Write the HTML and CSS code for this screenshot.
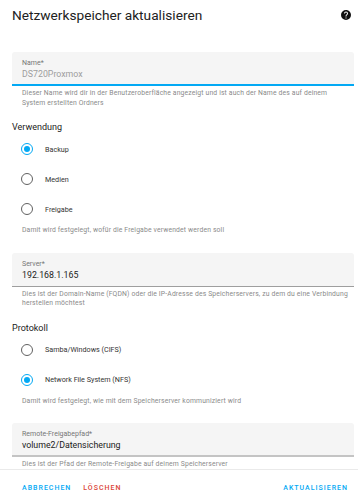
FILE: index.html
```html
<!DOCTYPE html>
<html lang="de">
<head>
    <meta charset="UTF-8">
    <title>Netzwerkspeicher aktualisieren</title>
    <link rel="stylesheet" href="styles.css">
</head>
<body>
    <div class="dialog">
        <header class="head">
            <h2 class="title">Netzwerkspeicher aktualisieren</h2>
            <svg class="help" viewBox="0 0 24 24" width="12" height="12">
                <path d="M15.07,11.25L14.17,12.17C13.45,12.89 13,13.5 13,15H11V14.5C11,13.39 11.45,12.39 12.17,11.67L13.41,10.41C13.78,10.05 14,9.55 14,9C14,7.89 13.1,7 12,7A2,2 0 0,0 10,9H8A4,4 0 0,1 12,5A4,4 0 0,1 16,9C16,9.880 15.64,10.67 15.07,11.25M13,19H11V17H13M12,2A10,10 0 0,0 2,12A10,10 0 0,0 12,22A10,10 0 0,0 22,12C22,6.47 17.5,2 12,2Z" fill="#111"/>
            </svg>
        </header>

        <div class="content">
            <div class="field disabled focus">
                <span class="f-label">Name*</span>
                <span class="f-value">DS720Proxmox</span>
            </div>
            <p class="helper">Dieser Name wird dir in der Benutzeroberfläche angezeigt und ist auch der Name des auf deinem System erstellten Ordners</p>

            <div class="group-label">Verwendung</div>
            <ul class="radios">
                <li class="radio checked"><span class="dot"></span>Backup</li>
                <li class="radio"><span class="dot"></span>Medien</li>
                <li class="radio"><span class="dot"></span>Freigabe</li>
            </ul>
            <p class="helper one">Damit wird festgelegt, wofür die Freigabe verwendet werden soll</p>

            <div class="field">
                <span class="f-label">Server*</span>
                <span class="f-value">192.168.1.165</span>
            </div>
            <p class="helper">Dies ist der Domain-Name (FQDN) oder die IP-Adresse des Speicherservers, zu dem du eine Verbindung herstellen möchtest</p>

            <div class="group-label">Protokoll</div>
            <ul class="radios">
                <li class="radio"><span class="dot"></span>Samba/Windows (CIFS)</li>
                <li class="radio checked"><span class="dot"></span>Network File System (NFS)</li>
            </ul>
            <p class="helper one">Damit wird festgelegt, wie mit dem Speicherserver kommuniziert wird</p>

            <div class="field hover">
                <span class="f-label">Remote-Freigabepfad*</span>
                <span class="f-value">volume2/Datensicherung</span>
            </div>
            <p class="helper">Dies ist der Pfad der Remote-Freigabe auf deinem Speicherserver</p>
        </div>

        <footer class="actions">
            <a class="btn">Abbrechen</a>
            <a class="btn warn">Löschen</a>
            <a class="btn push">Aktualisieren</a>
        </footer>
    </div>
</body>
</html>
```

FILE: styles.css
```css
* {
    margin: 0;
    padding: 0;
    box-sizing: border-box;
}

body {
    background: #fff;
    font-family: Roboto, "Liberation Sans", sans-serif;
    color: #212121;
}

.dialog {
    width: 358px;
    height: 500px;
    overflow: hidden;
    display: flex;
    flex-direction: column;
}

.head {
    display: flex;
    align-items: center;
    justify-content: space-between;
    padding: 4px 6px 0 12px;
    height: 26px;
    flex-shrink: 0;
}

.title {
    font-size: 13.7px;
    font-weight: 400;
    color: #212121;
}

.content {
    padding: 26px 4px 0 12px;
    height: 443px;
    flex-shrink: 0;
}

.field {
    background: #f5f5f5;
    border-radius: 3px 3px 0 0;
    border-bottom: 1px solid #9e9e9e;
    height: 34px;
    padding: 7px 10px 0;
    display: flex;
    flex-direction: column;
}

.field.focus {
    border-bottom: 2px solid #03a9f4;
}

.field.hover {
    border-bottom: 2px solid #c4c4c4;
}

.f-label {
    font-size: 7px;
    line-height: 9px;
    color: #757575;
}

.f-value {
    font-size: 8.8px;
    line-height: 12px;
    color: #212121;
}

.disabled .f-value {
    color: #9e9e9e;
}

.helper {
    font-size: 6.8px;
    letter-spacing: 0.15px;
    line-height: 9.5px;
    color: #8a8a8a;
    padding: 3px 4px 0 10px;
}

.group-label {
    font-size: 9px;
    line-height: 12px;
    margin-top: 13px;
    color: #212121;
}

.radios {
    list-style: none;
    margin-top: 1px;
}

.radio {
    display: flex;
    align-items: center;
    height: 30px;
    font-size: 7.2px;
    color: #333;
    padding-left: 9px;
}

.dot {
    width: 12px;
    height: 12px;
    border: 1.5px solid #616161;
    border-radius: 50%;
    margin-right: 12px;
    display: flex;
    align-items: center;
    justify-content: center;
}

.checked .dot {
    border-color: #03a9f4;
}

.checked .dot::after {
    content: "";
    width: 6px;
    height: 6px;
    border-radius: 50%;
    background: #03a9f4;
}

.helper.one {
    padding-top: 2px;
    margin-bottom: 17px;
}

.actions {
    border-top: 1px solid #eaeaea;
    display: flex;
    gap: 12px;
    padding: 14px 10px 0 22px;
    flex: 1;
}

.btn {
    font-size: 7px;
    font-weight: 500;
    letter-spacing: 1px;
    text-transform: uppercase;
    color: #03a9f4;
}

.btn.warn {
    color: #db4437;
}

.btn.push {
    margin-left: auto;
}
```
